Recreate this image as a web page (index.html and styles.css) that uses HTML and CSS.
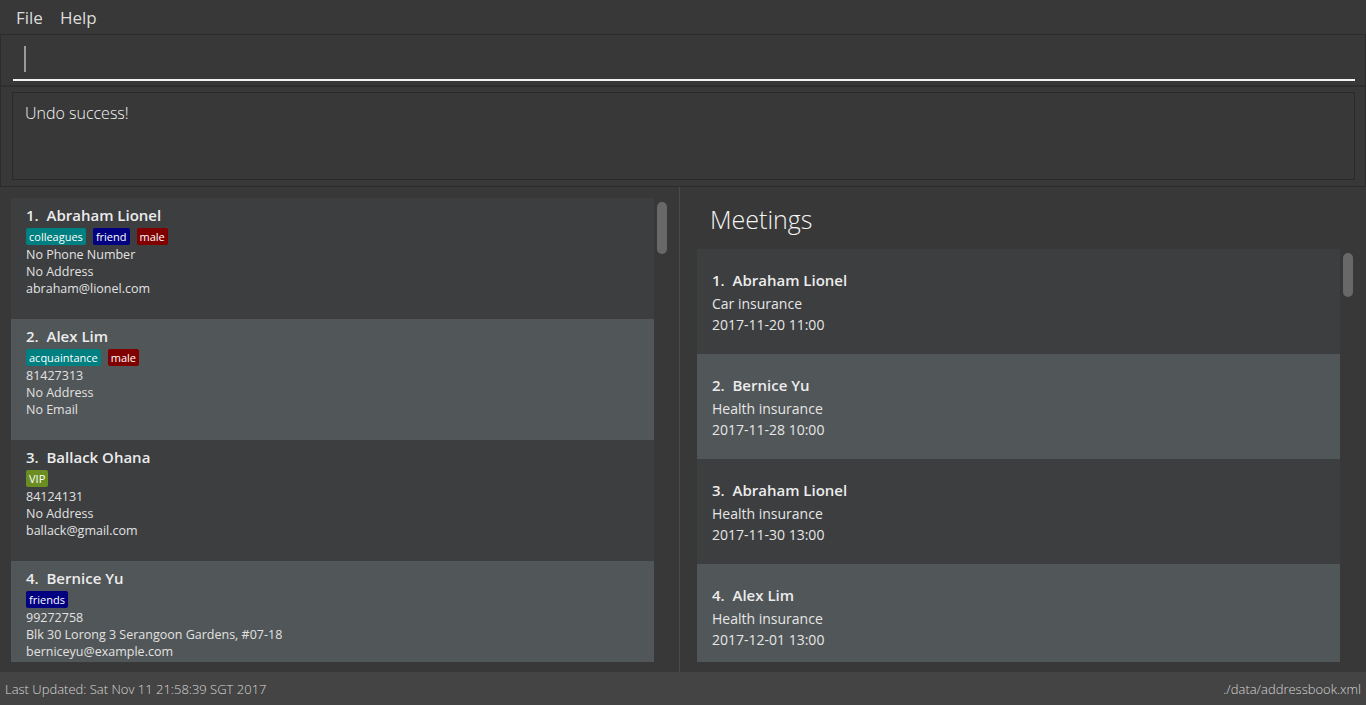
FILE: index.html
```html
<!DOCTYPE html>
<html lang="en">
<head>
  <meta charset="UTF-8" />
  <title>Address App</title>
  <link rel="stylesheet" href="styles.css">
</head>
<body>
  <div class="menu-bar">
    <span class="menu-item">File</span>
    <span class="menu-item">Help</span>
  </div>

  <div class="command-pane">
    <div class="command-field"><span class="caret"></span></div>
  </div>

  <div class="result-pane">
    <div class="result-box">Undo success!</div>
  </div>

  <div class="split">
    <div class="person-pane">
      <div class="list-view">
        <div class="card even">
          <div class="name">1.&nbsp; Abraham Lionel</div>
          <div class="tags">
            <span class="tag teal">colleagues</span>
            <span class="tag navy">friend</span>
            <span class="tag maroon">male</span>
          </div>
          <div class="line">No Phone Number</div>
          <div class="line">No Address</div>
          <div class="line">abraham@lionel.com</div>
        </div>
        <div class="card odd">
          <div class="name">2.&nbsp; Alex Lim</div>
          <div class="tags">
            <span class="tag teal">acquaintance</span>
            <span class="tag maroon">male</span>
          </div>
          <div class="line">81427313</div>
          <div class="line">No Address</div>
          <div class="line">No Email</div>
        </div>
        <div class="card even">
          <div class="name">3.&nbsp; Ballack Ohana</div>
          <div class="tags">
            <span class="tag olive">VIP</span>
          </div>
          <div class="line">84124131</div>
          <div class="line">No Address</div>
          <div class="line">ballack@gmail.com</div>
        </div>
        <div class="card odd">
          <div class="name">4.&nbsp; Bernice Yu</div>
          <div class="tags">
            <span class="tag navy">friends</span>
          </div>
          <div class="line">99272758</div>
          <div class="line">Blk 30 Lorong 3 Serangoon Gardens, #07-18</div>
          <div class="line">berniceyu@example.com</div>
        </div>
        <div class="thumb person-thumb"></div>
      </div>
    </div>

    <div class="meeting-pane">
      <div class="meeting-title">Meetings</div>
      <div class="list-view meeting-list">
        <div class="meeting even">
          <div class="name">1.&nbsp; Abraham Lionel</div>
          <div class="detail">Car insurance</div>
          <div class="detail">2017-11-20 11:00</div>
        </div>
        <div class="meeting odd">
          <div class="name">2.&nbsp; Bernice Yu</div>
          <div class="detail">Health insurance</div>
          <div class="detail">2017-11-28 10:00</div>
        </div>
        <div class="meeting even">
          <div class="name">3.&nbsp; Abraham Lionel</div>
          <div class="detail">Health insurance</div>
          <div class="detail">2017-11-30 13:00</div>
        </div>
        <div class="meeting odd">
          <div class="name">4.&nbsp; Alex Lim</div>
          <div class="detail">Health insurance</div>
          <div class="detail">2017-12-01 13:00</div>
        </div>
        <div class="thumb meeting-thumb"></div>
      </div>
    </div>
  </div>

  <div class="status-bar">
    <span>Last Updated: Sat Nov 11 21:58:39 SGT 2017</span>
    <span>./data/addressbook.xml</span>
  </div>
</body>
</html>
```

FILE: styles.css
```css
html, body {
  margin: 0;
  padding: 0;
  width: 1366px;
  height: 705px;
  overflow: hidden;
  background: #383838;
  color: #e8e8e8;
  font-family: "Open Sans", "Noto Sans", sans-serif;
}
body {
  display: flex;
  flex-direction: column;
}

/* 1. Menu bar */
.menu-bar {
  height: 35px;
  display: flex;
  align-items: center;
  gap: 17px;
  padding-left: 16px;
  background: #383838;
  border-bottom: 1px solid #2c2c2c;
  box-sizing: border-box;
  flex-shrink: 0;
}
.menu-item {
  font-size: 17px;
  color: #dcdcdc;
}

/* 2. Command box */
.command-pane {
  height: 52px;
  padding: 11px 10px 0 12px;
  border-left: 1px solid #2c2c2c;
  border-right: 1px solid #2c2c2c;
  border-bottom: 2px solid #2e2e2e;
  box-sizing: border-box;
  flex-shrink: 0;
}
.command-field {
  height: 35px;
  border-bottom: 2px solid #f2f2f2;
  padding-left: 11px;
  box-sizing: border-box;
}
.caret {
  display: block;
  width: 2px;
  height: 26px;
  background: #9a9a9a;
}

/* 3. Result display */
.result-pane {
  height: 100px;
  padding: 5px 10px 6px 11px;
  border-left: 1px solid #2c2c2c;
  border-right: 1px solid #2c2c2c;
  border-bottom: 1px solid #2c2c2c;
  box-sizing: border-box;
  flex-shrink: 0;
}
.result-box {
  height: 100%;
  border: 1px solid #2a2a2a;
  box-sizing: border-box;
  padding: 9px 12px;
  font-size: 16px;
  color: #f4f4f4;
  font-weight: 300;
}

/* 4. Split panes */
.split {
  flex: 1;
  display: flex;
  min-height: 0;
}
.person-pane {
  width: 680px;
  border-right: 1px solid #4a4a4a;
  padding: 11px 0 10px 11px;
  box-sizing: border-box;
  display: flex;
  flex-direction: column;
}
.meeting-pane {
  flex: 1;
  display: flex;
  flex-direction: column;
  padding: 0 0 10px 17px;
  min-width: 0;
}
.meeting-title {
  height: 62px;
  padding: 15px 0 0 13px;
  box-sizing: border-box;
  font-size: 25px;
  font-weight: 300;
  color: #f4f4f4;
}

.list-view {
  position: relative;
  flex: 1;
  overflow: hidden;
  padding-right: 25px;
}
.meeting-list { padding-right: 26px; }

.card {
  height: 121px;
  padding: 6px 15px 0;
  box-sizing: border-box;
}
.meeting {
  height: 105px;
  padding: 20px 15px 0;
  box-sizing: border-box;
}
.even { background: #3c3e40; }
.odd { background: #515658; }

.name {
  font-size: 15px;
  font-weight: 600;
  line-height: 22px;
  color: #ececec;
}
.tags {
  display: flex;
  gap: 7px;
  margin-top: 2px;
  margin-bottom: 1px;
  height: 17px;
}
.tag {
  font-size: 11px;
  line-height: 17px;
  padding: 0 3px;
  border-radius: 2px;
  color: #fff;
}
.teal { background: #008080; }
.navy { background: #000080; }
.maroon { background: #800000; }
.olive { background: #6b8e23; }

.line {
  font-size: 12.5px;
  line-height: 17px;
  color: #e2e2e2;
}
.meeting .name { margin-bottom: 2px; }
.detail {
  font-size: 14px;
  line-height: 21px;
  color: #e6e6e6;
}

/* scroll thumbs sit over the list */
.thumb {
  position: absolute;
  width: 10px;
  border-radius: 5px;
  background: #686868;
}
.person-thumb { top: 4px; right: 12px; height: 52px; }
.meeting-thumb { top: 4px; right: 13px; height: 44px; }

/* 5. Status bar */
.status-bar {
  height: 33px;
  flex-shrink: 0;
  background: #444444;
  display: flex;
  align-items: center;
  justify-content: space-between;
  padding: 0 5px 0 5px;
  font-size: 13px;
  font-weight: 300;
  color: #d6d6d6;
}
```
